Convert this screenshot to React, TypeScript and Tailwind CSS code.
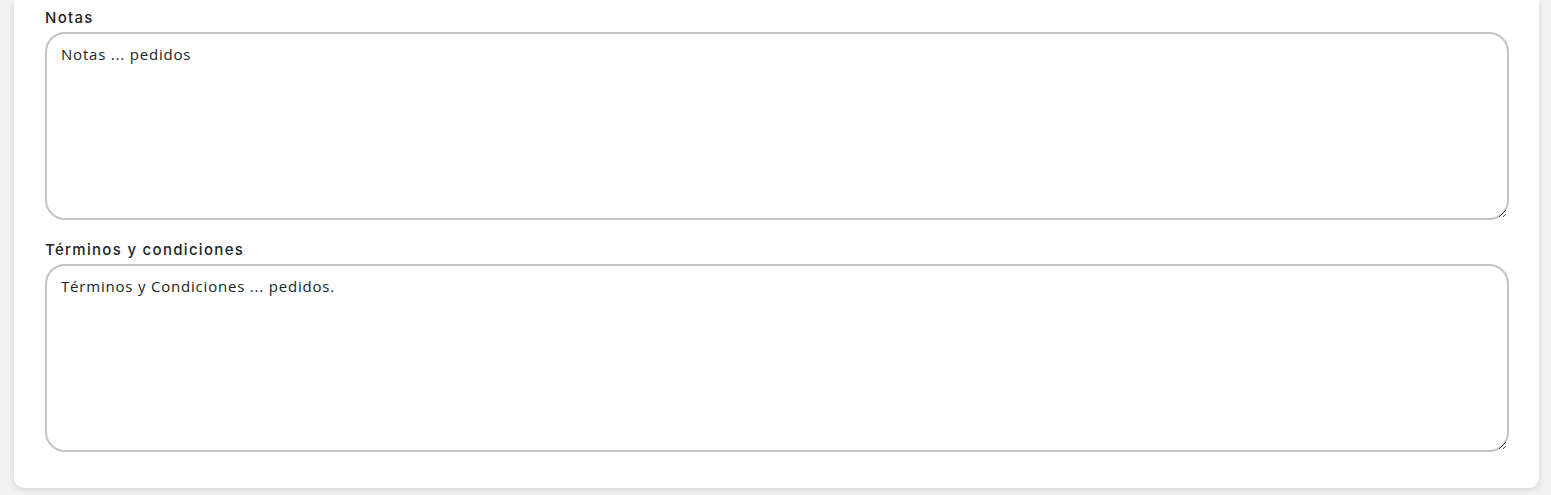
import React from 'react';

function Field({ label, value }: { label: string; value: string }) {
  return <div className="flex flex-col">
      <label className="font-['Inter',sans-serif] text-[15px] leading-[20px] font-medium tracking-[1.3px] text-[#212529] mb-[4px]">{label}</label>
      <textarea defaultValue={value} className="h-[188px] w-full rounded-[20px] border-2 border-[#c4c4c4] bg-white px-[14px] py-[10px] text-[15px] leading-[21px] tracking-[0.8px] text-[#212529] outline-none resize-y" />
    </div>;
}

export default function App() {
  return <div className="w-full min-h-screen bg-[#f2f2f2] pl-[14px] pr-[12px] pb-[7px]" style={{ fontFamily: '"Open Sans", "DejaVu Sans", sans-serif' }}>
      <div className="bg-white rounded-b-[10px] shadow-[0_2px_6px_rgba(0,0,0,0.12)] pl-[31px] pr-[30px] pt-[8px] pb-[36px] flex flex-col gap-[20px]">
        <Field label="Notas" value="Notas ... pedidos" />
        <Field label="Términos y condiciones" value="Términos y Condiciones ... pedidos." />
      </div>
    </div>;
}
